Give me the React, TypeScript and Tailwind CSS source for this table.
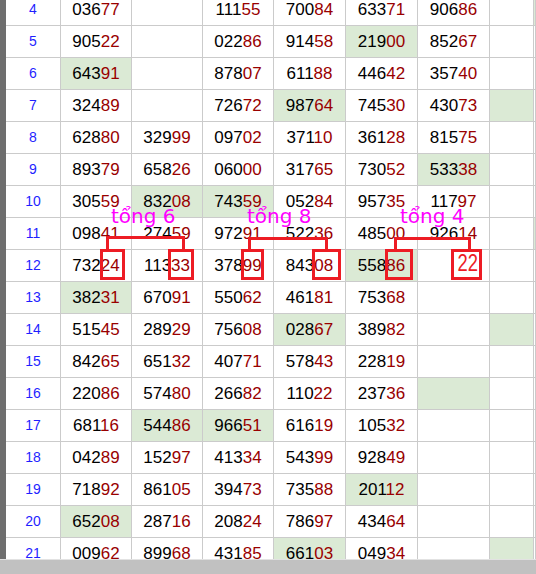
const rows: [number, string[]][] = [
  [4, ["03677", "", "11155", "70084", "63371", "90686", "", "*"]],
  [5, ["90522", "", "02286", "91458", "*21900", "85267", "", ""]],
  [6, ["*64391", "", "87807", "61188", "44642", "35740", "", ""]],
  [7, ["32489", "", "72672", "*98764", "74530", "43073", "*", ""]],
  [8, ["62880", "32999", "09702", "37110", "36128", "81575", "", ""]],
  [9, ["89379", "65826", "06000", "31765", "73052", "*53338", "", ""]],
  [10, ["30559", "*83208", "*74359", "05284", "95735", "11797", "", ""]],
  [11, ["09841", "27459", "97291", "52236", "48500", "92614", "", "*"]],
  [12, ["73224", "11333", "37899", "84308", "*55886", "", "", ""]],
  [13, ["*38231", "67091", "55062", "46181", "75368", "", "", ""]],
  [14, ["51545", "28929", "75608", "*02867", "38982", "", "*", ""]],
  [15, ["84265", "65132", "40771", "57843", "22819", "", "", ""]],
  [16, ["22086", "57480", "26682", "11022", "23736", "*", "", ""]],
  [17, ["68116", "*54486", "*96651", "61619", "10532", "", "", ""]],
  [18, ["04289", "15297", "41334", "54399", "92849", "", "", ""]],
  [19, ["71892", "86105", "39473", "73588", "*20112", "", "", ""]],
  [20, ["*65208", "28716", "20824", "78697", "43464", "", "", ""]],
  [21, ["00962", "89968", "43185", "*66103", "04934", "", "*", ""]],
];

// khung đỏ quanh 2 số cuối
const boxes = [
  { left: "left-[100px]", w: "w-[25px]" },
  { left: "left-[168px]", w: "w-[26px]" },
  { left: "left-[241px]", w: "w-[23px]" },
  { left: "left-[312px]", w: "w-[29px]" },
  { left: "left-[385px]", w: "w-[28px]" },
];

function Cell({ raw }: { raw: string }) {
  const green = raw.startsWith("*");
  const v = green ? raw.slice(1) : raw;
  return (
    <div
      className={`flex h-8 items-center justify-center border-r border-b border-[#cbcbcb] text-[17px] ${
        green ? "bg-[#dbead5]" : "bg-white"
      }`}
    >
      {v && (
        <span>
          <span className="text-black">{v.slice(0, 3)}</span>
          <span className="text-[#990000]">{v.slice(3)}</span>
        </span>
      )}
    </div>
  );
}

export default function App() {
  return (
    <div className="flex h-[574px] w-[536px] flex-col overflow-hidden bg-white font-['Liberation_Sans',Arial,sans-serif]">
      <div className="relative flex h-[559px] overflow-hidden">
        <div className="w-[6px] shrink-0 bg-[#6e6e6e]" />
        <div className="-mt-[6px] flex-1">
          {rows.map(([n, cells]) => (
            <div
              key={n}
              className="grid grid-cols-[55px_71px_71px_71px_72px_72px_72px_44px_1fr]"
            >
              <div className="flex h-8 items-center justify-center border-r border-b border-[#cbcbcb] text-[14px] text-[#1f1fff]">
                {n}
              </div>
              {cells.map((c, i) => (
                <Cell key={i} raw={c} />
              ))}
            </div>
          ))}
        </div>

        {/* chú thích tổng */}
        <div className="absolute left-[111px] top-[206px] font-['DejaVu_Sans',Verdana,sans-serif] text-[20px] leading-none text-[#ff00ff]">
          tổng 6
        </div>
        <div className="absolute left-[247px] top-[206px] font-['DejaVu_Sans',Verdana,sans-serif] text-[20px] leading-none text-[#ff00ff]">
          tổng 8
        </div>
        <div className="absolute left-[400px] top-[206px] font-['DejaVu_Sans',Verdana,sans-serif] text-[20px] leading-none text-[#ff00ff]">
          tổng 4
        </div>

        <div className="absolute left-[106px] top-[236px] h-[13px] w-[79px] border-x-[3px] border-t-[3px] border-[#ed1c24]" />
        <div className="absolute left-[248px] top-[237px] h-[12px] w-[80px] border-x-[3px] border-t-[3px] border-[#ed1c24]" />
        <div className="absolute left-[394px] top-[237px] h-[12px] w-[77px] border-x-[3px] border-t-[3px] border-[#ed1c24]" />

        {boxes.map((b, i) => (
          <div
            key={i}
            className={`absolute top-[249px] h-[31px] border-[3px] border-[#ed1c24] ${b.left} ${b.w}`}
          />
        ))}
        <div className="absolute left-[451px] top-[249px] flex h-[31px] w-[31px] items-center justify-center border-[3px] border-[#ed1c24] pb-[3px] pl-[2px]">
          <span className="inline-block scale-x-[0.8] text-[23px] leading-none text-[#ed1c24]">
            22
          </span>
        </div>
      </div>
      <div className="h-[15px] shrink-0 border-t border-[#e2e2e2] bg-[#c1c1c1]" />
    </div>
  );
}
